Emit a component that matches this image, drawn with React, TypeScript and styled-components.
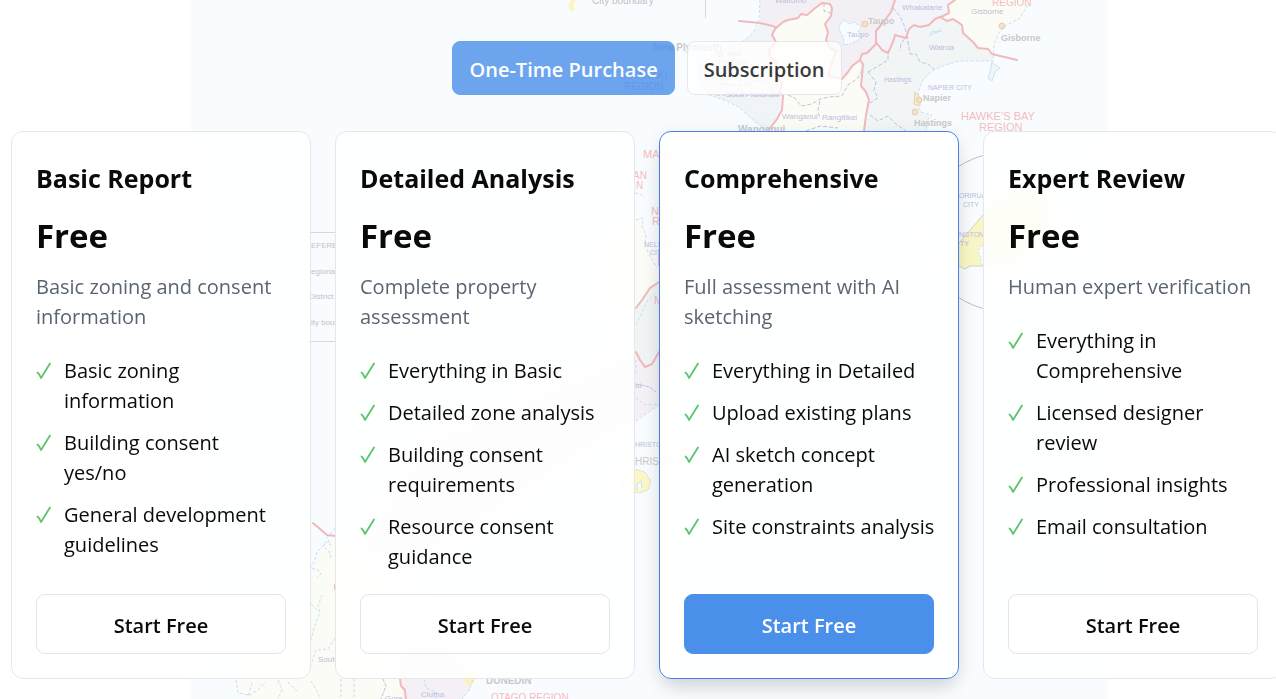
import React from "react";
import styled, { createGlobalStyle } from "styled-components";

const GlobalStyle = createGlobalStyle`
  *, *::before, *::after { box-sizing: border-box; }
  body {
    margin: 0;
    background: #ffffff;
    color: #0a0a0a;
    font-family: "Segoe UI", "Open Sans", "Noto Sans", sans-serif;
    font-size: 20px;
    line-height: 30px;
  }
`;

const Page = styled.main`
  position: relative;
  min-height: 100vh;
  overflow: hidden;
`;

const Backdrop = styled.svg`
  position: absolute;
  inset: 0;
  width: 100%;
  height: 100%;
  font-family: "Liberation Sans", Arial, sans-serif;
`;

const Section = styled.section`
  position: relative;
  display: flex;
  flex-direction: column;
  gap: 36px;
  margin-right: -7px;
  padding: 41px 0 20px 11px;
`;

const Toggle = styled.div`
  display: flex;
  justify-content: center;
  gap: 12px;
  opacity: 0.8;
`;

const ToggleButton = styled.button<{ $active?: boolean }>`
  height: 54px;
  padding: 3px 16px 0;
  border: 1px solid ${(p) => (p.$active ? "#4a90ea" : "#e4e4e7")};
  border-radius: 8px;
  background: ${(p) => (p.$active ? "#4a90ea" : "#ffffff")};
  color: ${(p) => (p.$active ? "#ffffff" : "#0a0a0a")};
  font: inherit;
  font-weight: 600;
  cursor: pointer;
`;

const Plans = styled.div`
  display: grid;
  grid-template-columns: repeat(4, minmax(0, 1fr));
  gap: 24px;
`;

const Card = styled.article<{ $featured?: boolean }>`
  display: flex;
  flex-direction: column;
  padding: 24px;
  border: 1px solid ${(p) => (p.$featured ? "#4a7fe6" : "#e5e7eb")};
  border-radius: 12px;
  background: rgba(255, 255, 255, 0.85);
  backdrop-filter: blur(10px);
  box-shadow: ${(p) =>
    p.$featured
      ? "0 12px 20px -4px rgba(0, 0, 0, 0.12), 0 4px 20px rgba(0, 0, 0, 0.07)"
      : "none"};
`;

const Title = styled.h2`
  margin: 0;
  font-size: 25px;
  line-height: 44px;
  font-weight: 700;
  white-space: nowrap;
`;

const Price = styled.p`
  margin: 12px 0;
  font-size: 33px;
  line-height: 48px;
  font-weight: 700;
`;

const Description = styled.p`
  margin: 0 0 24px;
  color: #5b6472;
`;

const Features = styled.ul`
  display: flex;
  flex: 1;
  flex-direction: column;
  gap: 12px;
  margin: 0 0 22px;
  padding: 0;
  list-style: none;
`;

const Feature = styled.li`
  display: flex;
  align-items: flex-start;
  gap: 12px;
`;

const Tick = styled.svg`
  flex: none;
  width: 16px;
  height: 30px;
`;

const StartButton = styled.button<{ $primary?: boolean }>`
  height: 60px;
  padding: 3px 16px 0;
  border: 1px solid ${(p) => (p.$primary ? "#4a90ea" : "#e4e4e7")};
  border-radius: 9px;
  background: ${(p) => (p.$primary ? "#4a90ea" : "#ffffff")};
  color: ${(p) => (p.$primary ? "#ffffff" : "#0a0a0a")};
  font: inherit;
  font-weight: 600;
  cursor: pointer;
`;

const plans = [
  {
    name: "Basic Report",
    description: "Basic zoning and consent information",
    features: ["Basic zoning information", "Building consent yes/no", "General development guidelines"],
  },
  {
    name: "Detailed Analysis",
    description: "Complete property assessment",
    features: [
      "Everything in Basic",
      "Detailed zone analysis",
      "Building consent requirements",
      "Resource consent guidance",
    ],
  },
  {
    name: "Comprehensive",
    description: "Full assessment with AI sketching",
    features: [
      "Everything in Detailed",
      "Upload existing plans",
      "AI sketch concept generation",
      "Site\u00a0constraints\u00a0analysis",
    ],
    featured: true,
  },
  {
    name: "Expert Review",
    description: "Human expert verification",
    features: [
      "Everything in Comprehensive",
      "Licensed designer review",
      "Professional insights",
      "Email consultation",
    ],
  },
];

function RegionMap() {
  return (
    <Backdrop viewBox="0 0 1276 699" preserveAspectRatio="xMidYMin slice" aria-hidden="true">
      <rect x="191" y="0" width="917" height="699" fill="#f8fcff" />

      {/* North Island regions */}
      <path fill="#f3f0f5" d="M760 0H895L893 8L885 20L876 31V44L852 68L842 79L828 76L836 53L826 40L825 26L833 8L830 3L807 13L798 18L783 22L776 28L760 23Z" />
      <path fill="#f3f4f9" d="M895 0L893 8L876 31V42L882 50L888 52L894 36L906 37L912 26L930 24L940 17L949 12L948 5L955 0Z" />
      <path fill="#f0f4f7" d="M760 23L753 33L742 42L725 48L710 56L698 68L700 83L709 95L727 101L740 108L755 122L768 131L783 110L778 82L776 62L768 54L776 42L773 25Z" />
      <path fill="#fbfcf5" d="M776 28L783 22L798 18L814 9L822 4L830 3L833 8L825 26L828 35L826 40L836 53L828 76L842 79L860 60L863 70L861 86L868 99L864 131V190L790 200L768 131L777 119L783 110L778 82L776 62L768 54L776 42Z" />
      <path fill="#f1f5f5" d="M876 44L882 50L888 52L894 36L906 37L912 26L930 24L940 17L958 20L965 35L975 46L993 54L992 61L975 61L960 61L945 65L932 71L923 80L919 90L917 104L921 112L930 115L927 131L900 210H860L864 131L868 99L861 86L860 60Z" />
      <path fill="#fbfcf5" d="M955 0H1030L1028 5L1020 18L1005 26L998 34L994 45L993 54L975 46L965 35L958 20L942 17L949 12L948 5Z" />
      <path fill="#f1f5f5" stroke="#c5e3f4" d="M992 62L990 72L988 78L992 81L995 72L1000 68L994 64Z" />
      <path fill="#f8fcff" stroke="#c5e3f4" strokeDasharray="3 1" d="M840 24L845 20L849 24L854 22L858 25L862 26L858 31L862 36L858 40L850 44L844 45L843 36L839 30Z" />
      <path fill="none" stroke="#c5e3f4" d="M929 34l4-3 3 2 5-5M929 36l6-4 3 1M934 32l8-1" />

      {/* coastline */}
      <g fill="none" stroke="#c2e1f4" strokeWidth="1" strokeDasharray="3 2">
        <path d="M760 0L759 20L753 33L742 42L725 48L710 56L698 68L700 83L709 95L727 101L740 108L755 122L768 131" />
        <path d="M1028 5L1020 18L1005 26L998 34L994 45L993 61L975 61L960 61L945 65L932 71L923 80L919 90L917 104L921 112L932 115L926 122L926 131" />
      </g>

      {/* district boundaries */}
      <g fill="none" stroke="#bfc2e0" strokeWidth="1" strokeDasharray="4 2">
        <path d="M893 8L900 16L904 25L907 35L901 44L900 51M907 35L910 54H916L920 62L928 64L934 69" />
        <path d="M868 72L880 65L888 60V52M868 72L876 82L874 90L878 98L870 103M870 115L878 121L888 116L896 124L906 131" />
        <path d="M788 95L795 98L801 106L812 104L820 99L829 97L842 96L848 85L858 78L862 70M820 101L818 110L820 119M806 131L820 126L838 128" />
        <path d="M824 3L824 11L831 13M720 84L740 86L757 80L772 85M716 95H782" />
      </g>

      {/* regional boundaries */}
      <g fill="none" stroke="#f2b8bc" strokeWidth="2" strokeLinejoin="round" strokeLinecap="round">
        <path d="M739 21L760 23L773 26L776 28L783 22L788 20L798 18L801 14L807 15L814 9L822 3L830 4L832 8L831 16L825 24L828 32L826 40L830 48L836 51L832 62L828 76L842 79L848 72L852 66L860 60L862 54L867 53L876 44L876 31L885 20L891 12L895 0" />
        <path d="M776 27L772 35L776 42L769 50L770 57L776 62L777 74L782 84L780 92L783 96L782 110L777 119L768 131" />
        <path d="M876 42L882 50L888 53L893 42L895 35L906 38L909 29L914 25L920 27L929 25L935 19L940 17L947 21L953 19L962 25L963 33L973 42L978 48L988 49L992 54L1017 60" />
        <path d="M941 17L949 13L948 5L955 0" />
        <path d="M860 60L863 64L862 76L861 86L866 92L869 100L866 115L864 131" />
      </g>

      {/* city dots */}
      <g fill="#f7dfc0" stroke="#e3cfb8">
        <circle cx="865" cy="24" r="3" />
        <circle cx="1002" cy="26" r="3" />
        <path fill="#faf5c4" d="M915 92L920 98L920 106L914 104Z" />
        <circle cx="919" cy="100" r="3" />
        <circle cx="915" cy="112" r="3" />
        <circle cx="720" cy="54" r="3" />
      </g>

      {/* Wellington inset */}
      <circle cx="1003" cy="232" r="79" fill="none" stroke="#bcbcbe" />
      <path fill="#f9f6c6" stroke="#d5d2c4" d="M950 262L959 243L972 228L983 215L1000 196L1040 190L1052 215L1036 245L1010 267L983 266L970 266L965 269L959 266Z" />
      <path fill="#f8fcff" stroke="#c5e3f4" strokeDasharray="2 2" d="M990 244L981 246L978 252L981 258L981 264L990 266Z" />

      {/* South Island */}
      <path fill="#fbfcf5" d="M600 240L635 219L643 217L645 232L650 255L656 270L680 262V290L650 288L635 308L600 330Z" />
      <path fill="#f0f4f4" d="M600 335L635 308L650 288L659 282H690L680 330L659 352L645 367L635 352Z" />
      <path fill="#f4f0f5" d="M635 352L645 367L659 352H680L659 405L650 411L635 421L560 470L420 560L350 560L430 440Z" />
      <path fill="#faf6c6" stroke="#bfe0ee" strokeDasharray="2 1" d="M622 474L635 469L645 472L651 481L648 490L640 493L622 490Z" />
      <path fill="#f8fcff" stroke="#bfe0ee" d="M637 490V484L641 481L642 488" />
      <path fill="#fbfcf5" d="M335 538L324 545L318 558L313 572L311 600L240 660L236 690L250 699H406L400 680L420 600Z" />
      <path fill="#f4f0f5" d="M400 680L404 699H462L470 690L473 679L440 600L380 590Z" />
      <path fill="#faf3bd" d="M460 668L478 676L470 687L463 680Z" />
      <g fill="none" stroke="#c2e1f4" strokeDasharray="3 2">
        <path d="M635 193L640 194L645 197M636 220L643 218L642 226L646 236L645 245L650 256L657 268M636 360V375M636 398L645 405L659 404M636 421L650 411L659 405M636 325L648 300L655 294" />
        <path d="M335 528L327 538L331 545L325 541L324 547L329 551L331 558M324 545L317 552L314 562L311 567M312 568L319 571L321 574L317 577M322 595L318 606L320 612L314 628L311 640M311 604L317 610M335 638L328 649L316 650L311 665" />
        <path d="M236 680L238 693L248 695M252 683L248 696L258 690L265 682M278 680L282 690L278 699M288 682L298 692M311 681L318 693L320 699M341 679V699M354 679V699M424 679L426 688L436 692L436 699M473 680L469 690L462 699" />
      </g>
      <g fill="none" stroke="#f2b8bc" strokeWidth="2" strokeLinejoin="round" strokeLinecap="round">
        <path d="M636 308L642 300L650 288L659 282M659 250V265M636 352L640 360L645 367L652 364L659 352" />
        <path d="M313 523L320 529L327 535L336 536M400 679L401 686L405 690L406 699M335 585V589" />
        <path stroke="#bfc2e0" strokeWidth="1" strokeDasharray="3 2" d="M636 384L650 387L656 392M383 679L386 686L381 699" />
      </g>

      {/* legend */}
      <g fill="none" stroke="#d5d8dc">
        <path d="M250 232.500H380M250 341.500H380M705.500 0V18" />
      </g>
      <path fill="#fbf6c0" d="M571 0H576L573 5L575 10L571 12L568 7Z" />
      <g fill="#c2c2c6" fontSize="8">
        <text x="311" y="248">EFERE</text>
        <text x="311" y="274">egional</text>
        <text x="309" y="299">District b</text>
        <text x="311" y="325">ity boun</text>
        <text x="592" y="4" fontSize="10">City boundary</text>
      </g>

      {/* town names */}
      <g fill="#c8c8ca" fontSize="10" fontWeight="bold">
        <text x="653" y="51">New Plymouth</text>
        <text x="738" y="133">Wanganui</text>
        <text x="868" y="24" fontSize="9">Taupo</text>
        <text x="1001" y="41" fontSize="9">Gisborne</text>
        <text x="923" y="101" fontSize="9">Napier</text>
        <text x="914" y="126" fontSize="9">Hastings</text>
        <text x="486" y="684">DUNEDIN</text>
        <text x="635" y="465" fontWeight="normal">HRISTCHURCH</text>
      </g>

      {/* district names */}
      <g fill="#bdbcdc" fontSize="8">
        <text x="775" y="3">Waitomo</text>
        <text x="847" y="37">Taupo</text>
        <text x="902" y="10">Whakatane</text>
        <text x="971" y="14">Gisborne</text>
        <text x="929" y="50">Wairoa</text>
        <text x="884" y="82" fontSize="7">Hastings</text>
        <text x="928" y="90" fontSize="7">NAPIER CITY</text>
        <text x="782" y="119">Wanganui</text>
        <text x="822" y="120">Rangitikei</text>
        <text x="727" y="56" fontSize="7">New</text>
        <text x="718" y="65" fontSize="7">Plymouth</text>
        <text x="726" y="97">South Taranaki</text>
        <text x="959" y="198" fontSize="7">ORIRUA</text>
        <text x="963" y="207" fontSize="7">CITY</text>
        <text x="959" y="237" fontSize="7">NGTON</text>
        <text x="960" y="246" fontSize="7">TY</text>
        <text x="644" y="247" fontSize="7">NELSON</text>
        <text x="650" y="255" fontSize="7">CITY</text>
        <text x="635" y="388">ui</text>
        <text x="635" y="447" fontSize="7">HRISTCH</text>
        <text x="318" y="662">South</text>
        <text x="421" y="697">Clutha</text>
        <text x="385" y="701">Gore</text>
      </g>

      {/* region names */}
      <g fill="#f4bcbe" fontSize="11">
        <text x="961" y="120">HAWKE’S BAY</text>
        <text x="979" y="131">REGION</text>
        <text x="992" y="6" fontSize="10">REGION</text>
        <text x="643" y="158">MARL</text>
        <text x="633" y="179" fontSize="10">AN</text>
        <text x="636" y="189" fontSize="10">N</text>
        <text x="651" y="215">NE</text>
        <text x="652" y="225">RE</text>
        <text x="654" y="304">M</text>
        <text x="618" y="79" fontSize="10" fill="#c8bcd0">TARANAKI</text>
        <text x="624" y="90" fontSize="10" fill="#c8bcd0">REGION</text>
        <text x="491" y="701" fontSize="10">OTAGO REGION</text>
      </g>
    </Backdrop>
  );
}

function Check() {
  return (
    <Tick viewBox="0 0 16 30" aria-hidden="true">
      <path
        d="M1.500 16.500Q3.500 18 5 22L14 7.500"
        fill="none"
        stroke="#5cc46c"
        strokeWidth="1.800"
        strokeLinecap="round"
        strokeLinejoin="round"
      />
    </Tick>
  );
}

export default function App() {
  const [mode, setMode] = React.useState("once");
  return (
    <Page>
      <GlobalStyle />
      <RegionMap />
      <Section>
        <Toggle>
          <ToggleButton $active={mode === "once"} aria-pressed={mode === "once"} onClick={() => setMode("once")}>
            One-Time Purchase
          </ToggleButton>
          <ToggleButton $active={mode === "sub"} aria-pressed={mode === "sub"} onClick={() => setMode("sub")}>
            Subscription
          </ToggleButton>
        </Toggle>
        <Plans>
          {plans.map((plan) => (
            <Card key={plan.name} $featured={plan.featured}>
              <Title>{plan.name}</Title>
              <Price>Free</Price>
              <Description>{plan.description}</Description>
              <Features>
                {plan.features.map((feature) => (
                  <Feature key={feature}>
                    <Check />
                    <span>{feature}</span>
                  </Feature>
                ))}
              </Features>
              <StartButton $primary={plan.featured}>Start Free</StartButton>
            </Card>
          ))}
        </Plans>
      </Section>
    </Page>
  );
}
